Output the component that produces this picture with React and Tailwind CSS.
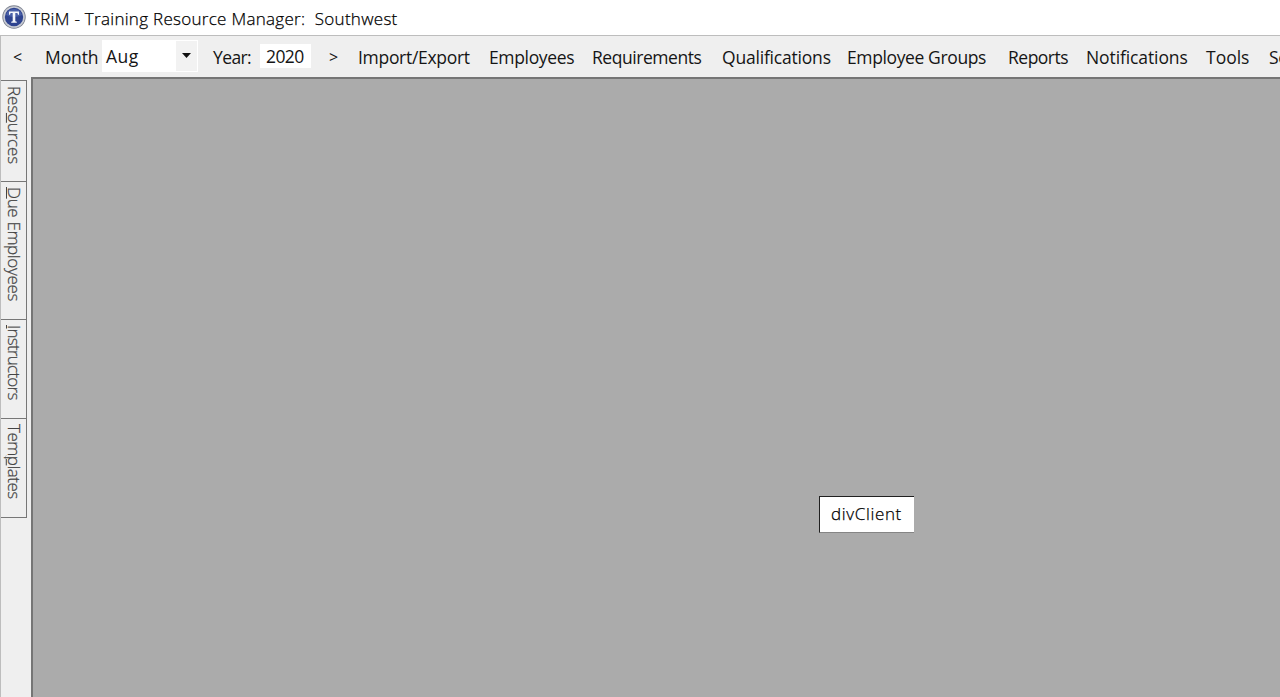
import React from "react";

const menu = [
  { label: "Import/Export", cls: "w-[131px] tracking-[-0.3px]" },
  { label: "Employees", cls: "w-[103px] tracking-[-0.35px]" },
  { label: "Requirements", cls: "w-[130px] tracking-[-0.45px]" },
  { label: "Qualifications", cls: "w-[125px] tracking-[-0.2px]" },
  { label: "Employee Groups", cls: "w-[161px] tracking-[-0.38px]" },
  { label: "Reports", cls: "w-[78px] tracking-[-0.5px]" },
  { label: "Notifications", cls: "w-[120px] tracking-[-0.1px]" },
  { label: "Tools", cls: "w-[63px] tracking-[0px]" },
  { label: "Setup", cls: "w-[60px] tracking-[-0.25px]" },
];

const tabs = [
  { before: "Res", key: "o", after: "urces", cls: "h-[101px]", text: "tracking-[-0.15px]" },
  { before: "", key: "D", after: "ue Employees", cls: "h-[138px]", text: "tracking-[-0.35px]" },
  { before: "", key: "I", after: "nstructors", cls: "h-[99px]", text: "tracking-[-0.75px]" },
  { before: "Tem", key: "p", after: "lates", cls: "h-[99px]", text: "tracking-[-0.5px]" },
];

function Logo() {
  return (
    <svg className="ml-[2px] h-6 w-6 shrink-0 -translate-y-px" viewBox="0 0 24 24">
      <circle cx="12" cy="12" r="11.7" fill="#7d8290" />
      <circle cx="12" cy="12" r="10.8" fill="#c9ccd4" />
      <circle cx="12" cy="12" r="9.2" fill="#2f4490" />
      <path d="M4 10a8.3 8.3 0 0 1 16 0q-8 4-16 0Z" fill="#4a60a8" />
      <path d="M7 6.5h10v3.2h-1l-.6-1.6h-2.1v8.2l1.5.5v.9H9.2v-.9l1.5-.5V8.1H8.6L8 9.7H7Z" fill="#f4f6fb" />
    </svg>
  );
}

export default function App() {
  return (
    <div className="flex h-[697px] w-[1280px] flex-col overflow-hidden bg-[#efefef] font-['Open_Sans','Noto_Sans',sans-serif] text-black">
      <header className="flex h-[35px] shrink-0 items-center bg-white">
        <Logo />
        <h1 className="ml-[5px] whitespace-pre pt-[3px] text-[17px] leading-6 font-light tracking-[0.29px] [-webkit-text-stroke:0.25px_black]">
          {"TRiM - Training Resource Manager:  Southwest"}
        </h1>
      </header>

      <nav className="flex h-[42px] shrink-0 items-center overflow-hidden border-t border-l border-[#bdbdbd] text-[17.5px] leading-6 whitespace-nowrap text-[#151515]">
        <span className="w-[44px] shrink-0 pl-[12px] text-[16px]">&lt;</span>
        <span className="w-[57px] shrink-0 tracking-[-0.1px]">Month</span>
        <div className="flex h-[32px] w-[96px] shrink-0 -translate-y-px items-center bg-white">
          <span className="flex-1 pl-[4px] tracking-[0.5px]">Aug</span>
          <span className="mr-px flex h-[30px] w-[21px] items-center justify-center bg-[#f2f2f2]">
            <svg className="h-[5px] w-[9px]" viewBox="0 0 9 5">
              <path d="M0 0h9L4.5 5Z" fill="#111" />
            </svg>
          </span>
        </div>
        <span className="w-[62px] shrink-0 pl-[15px] tracking-[-0.6px]">Year:</span>
        <span className="h-[24px] w-[51px] shrink-0 -translate-y-px bg-white pl-[6px] tracking-[-0.6px]">2020</span>
        <span className="w-[47px] shrink-0 pl-[18px] text-[16px]">&gt;</span>
        {menu.map((m) => (
          <span key={m.label} className={`shrink-0 ${m.cls}`}>
            {m.label}
          </span>
        ))}
      </nav>

      <div className="flex min-h-0 flex-1">
        <aside className="w-[31px] shrink-0 border-l border-[#bdbdbd] pt-[3px]">
          <div className="w-[26px] border-t border-r border-[#777]">
            {tabs.map((t) => (
              <div key={t.after} className={`border-b border-[#777] pt-[5px] ${t.cls}`}>
                <span
                  className={`ml-px block h-full w-[25px] text-[17px] leading-[25px] font-light whitespace-nowrap text-[#444] [-webkit-text-stroke:0.25px_#444] [writing-mode:vertical-rl] ${t.text}`}
                >
                  {t.before}
                  <span className="underline decoration-1 underline-offset-[-2px] [text-underline-position:left]">{t.key}</span>
                  {t.after}
                </span>
              </div>
            ))}
          </div>
        </aside>
        <main className="relative flex-1 border-t-2 border-l-2 border-[#757575] bg-[#ababab]">
          <div className="absolute top-[417px] left-[786px] flex h-[37px] w-[95px] items-center border-t border-b border-l border-t-[#202020] border-b-[#858585] border-l-[#202020] bg-white pb-[2px] pl-[11px] text-[17px] leading-6 font-light tracking-[0.65px] [-webkit-text-stroke:0.25px_black]">
            divClient
          </div>
        </main>
      </div>
    </div>
  );
}
